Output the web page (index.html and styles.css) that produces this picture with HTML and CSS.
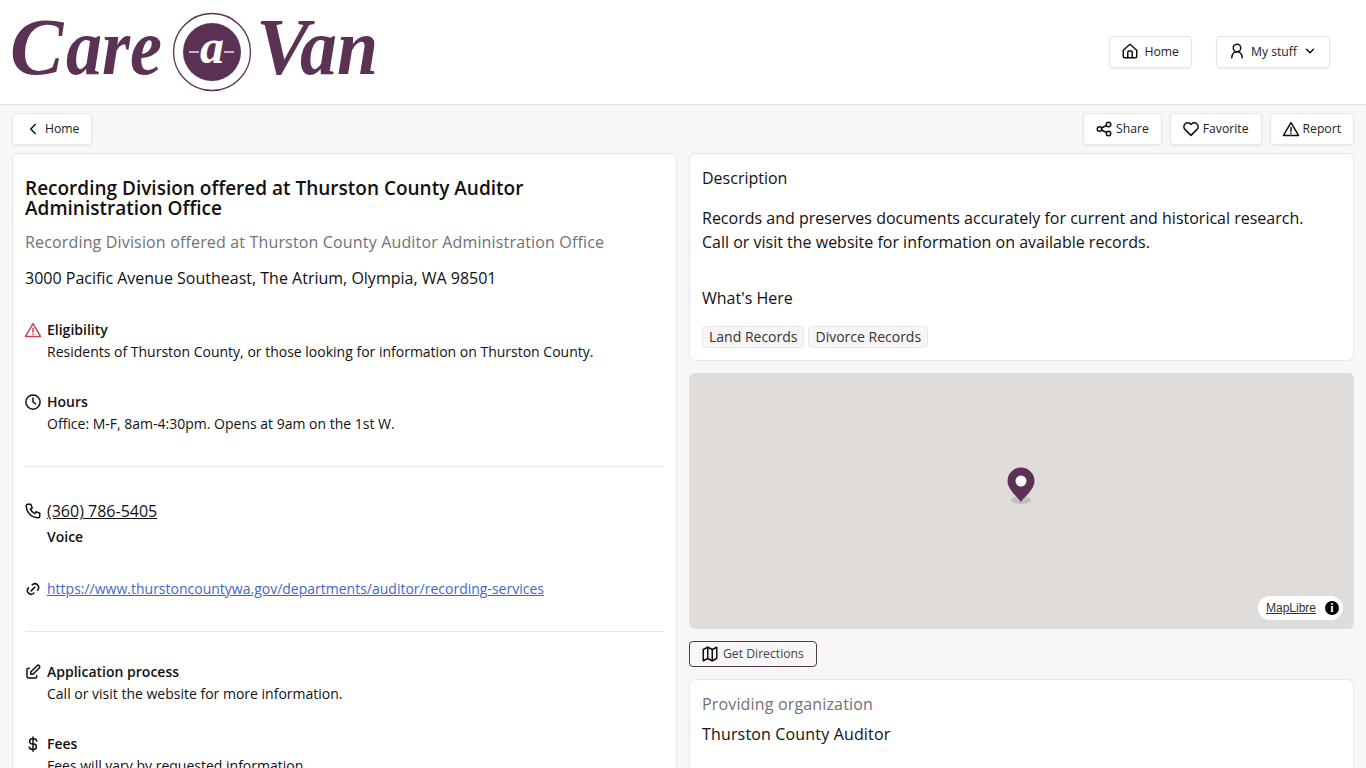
FILE: index.html
```html
<!DOCTYPE html>
<html lang="en">

<head>
  <meta charset="UTF-8" />
  <meta name="viewport" content="width=device-width, initial-scale=1.0" />
  <title>Recording Division - Care-a-Van</title>
  <link rel="stylesheet" href="styles.css">
</head>

<body>
  <header class="site-header">
    <a href="#" class="logo" aria-label="Care-a-Van">
      <svg width="378" height="104" viewBox="-4 -9 378 104">
        <text class="logo-word" y="65"><tspan x="-2">C</tspan><tspan x="54" textLength="96" lengthAdjust="spacingAndGlyphs">are</tspan></text>
        <circle cx="200" cy="43" r="38.5" fill="none" stroke="#5b3254" stroke-width="1.3" />
        <circle cx="200" cy="43" r="29" fill="#5b3254" />
        <text class="logo-a" x="200" y="54" text-anchor="middle">a</text>
        <path d="M177 43h10M212 43h10" stroke="#e9dfe7" stroke-width="1.6" />
        <text class="logo-word" y="65"><tspan x="244">V</tspan><tspan x="288" textLength="78" lengthAdjust="spacingAndGlyphs">an</tspan></text>
      </svg>
    </a>
    <nav class="main-nav">
      <button class="btn btn-wide">
        <svg class="icon" viewBox="0 0 24 24"><path d="M3 11l9-8 9 8v8a2 2 0 0 1-2 2H5a2 2 0 0 1-2-2z" /><path d="M9 21v-7a2 2 0 0 1 2-2h2a2 2 0 0 1 2 2v7" /></svg>
        Home
      </button>
      <button class="btn btn-wide">
        <svg class="icon" viewBox="0 0 24 24"><circle cx="12" cy="8" r="5" /><path d="M5 21c.5-5 3-8 7-8s6.500 3 7 8" /></svg>
        My stuff
        <svg class="icon icon-chevron" viewBox="0 0 24 24"><path d="M6 9l6 6 6-6" /></svg>
      </button>
    </nav>
  </header>

  <div class="action-bar">
    <button class="btn">
      <svg class="icon" viewBox="0 0 24 24"><path d="M15 6l-6 6 6 6" /></svg>
      Home
    </button>
    <div class="action-group">
      <button class="btn">
        <svg class="icon" viewBox="0 0 24 24"><circle cx="6" cy="12" r="3" /><circle cx="18" cy="6" r="3" /><circle cx="18" cy="18" r="3" /><path d="M8.700 10.700l6.600-3.400M8.700 13.300l6.600 3.400" /></svg>
        Share
      </button>
      <button class="btn">
        <svg class="icon" viewBox="0 0 24 24"><path d="M12 20.500l-8-8a5 5 0 0 1 0-7.200 5.200 5.200 0 0 1 7.300 0l.7.700.7-.7a5.200 5.200 0 0 1 7.300 0 5 5 0 0 1 0 7.200z" /></svg>
        Favorite
      </button>
      <button class="btn">
        <svg class="icon" viewBox="0 0 24 24"><path d="M12 3.500L2 20.500h20z" /><path d="M12 10v5M12 17.500v.5" /></svg>
        Report
      </button>
    </div>
  </div>

  <main class="columns">
    <section class="card">
      <h1>Recording Division offered at Thurston County Auditor Administration Office</h1>
      <p class="subtitle">Recording Division offered at Thurston County Auditor Administration Office</p>
      <p class="address">3000 Pacific Avenue Southeast, The Atrium, Olympia, WA 98501</p>

      <div class="info-row info-first">
        <svg class="icon icon-alert" viewBox="0 0 24 24"><path d="M12 3.500L2 20.500h20z" /><path d="M12 10v5M12 17.500v.5" /></svg>
        <div>
          <div class="info-title">Eligibility</div>
          <div>Residents of Thurston County, or those looking for information on Thurston County.</div>
        </div>
      </div>

      <div class="info-row">
        <svg class="icon" viewBox="0 0 24 24"><circle cx="12" cy="12" r="9.500" /><path d="M12 6.500V12l3.500 2.500" /></svg>
        <div>
          <div class="info-title">Hours</div>
          <div>Office: M-F, 8am-4:30pm. Opens at 9am on the 1st W.</div>
        </div>
      </div>

      <hr class="divider">

      <div class="info-row info-phone">
        <svg class="icon" viewBox="0 0 24 24"><path d="M5 3h4l2 5-2.500 1.500a11 11 0 0 0 6 6L16 13l5 2v4a2 2 0 0 1-2 2A16 16 0 0 1 3 5a2 2 0 0 1 2-2" /></svg>
        <div>
          <a href="#" class="phone">(360) 786-5405</a>
          <div class="info-title phone-type">Voice</div>
        </div>
      </div>

      <div class="info-row info-link">
        <svg class="icon" viewBox="0 0 24 24"><path d="M9.500 14.500l5-5" /><path d="M11 6.500l.5-.5a5 5 0 0 1 7 7l-.5.5" /><path d="M13 17.500l-.5.500a5 5 0 0 1-7-7l.5-.5" /></svg>
        <a href="#" class="site-link">https://www.thurstoncountywa.gov/departments/auditor/recording-services</a>
      </div>

      <hr class="divider divider-second">

      <div class="info-row info-first-small">
        <svg class="icon" viewBox="0 0 24 24"><path d="M7 7H6a2 2 0 0 0-2 2v9a2 2 0 0 0 2 2h9a2 2 0 0 0 2-2v-1" /><path d="M20.400 6.600a2.100 2.100 0 0 0-3-3L9 12v3h3z" /></svg>
        <div>
          <div class="info-title">Application process</div>
          <div>Call or visit the website for more information.</div>
        </div>
      </div>

      <div class="info-row">
        <svg class="icon" viewBox="0 0 24 24"><path d="M17 8a4 4 0 0 0-4-3h-2a3.500 3.500 0 0 0 0 7h2a3.500 3.500 0 0 1 0 7h-2a4 4 0 0 1-4-3" /><path d="M12 2.500v19" /></svg>
        <div>
          <div class="info-title">Fees</div>
          <div>Fees will vary by requested information.</div>
        </div>
      </div>
    </section>

    <div class="side">
      <section class="card">
        <h2>Description</h2>
        <p class="description">Records and preserves documents accurately for current and historical research.<br>Call or visit the website for information on available records.</p>
        <h2 class="whats-here">What's Here</h2>
        <div class="chips">
          <span class="chip">Land Records</span>
          <span class="chip">Divorce Records</span>
        </div>
      </section>

      <div class="map">
        <svg class="map-pin" width="40" height="44" viewBox="0 0 40 44">
          <ellipse cx="20" cy="36" rx="10" ry="4" fill="#000" opacity="0.13" />
          <path d="M20 38c-2-4-13.500-12-13.500-21a13.500 13.500 0 0 1 27 0c0 9-11.500 17-13.500 21z" fill="#5b3254" />
          <circle cx="20" cy="17" r="5.500" fill="#fff" />
        </svg>
        <div class="map-credit">
          <a href="#">MapLibre</a>
          <span class="map-info">i</span>
        </div>
      </div>

      <div class="directions">
        <button class="btn btn-outline">
          <svg class="icon" viewBox="0 0 24 24"><path d="M3 6l6-3 6 3 6-3v15l-6 3-6-3-6 3z" /><path d="M9 3v15M15 6v15" /></svg>
          Get Directions
        </button>
      </div>

      <section class="card">
        <div class="org-label">Providing organization</div>
        <div class="org-name">Thurston County Auditor</div>
        <p class="org-text">The Thurston County Auditor provides recording, elections and licensing services for residents.</p>
      </section>
    </div>
  </main>
</body>

</html>
```

FILE: styles.css
```css
:root {
  --primary-color: #5b3254;
  --bg-color: #f8f6f6;
  --text-color: #111;
  --muted-color: #6f7276;
  --border-color: #e8e6e6;
  --border-radius: 6px;
}

* {
  box-sizing: border-box;
}

html,
body {
  margin: 0;
  padding: 0;
  height: 768px;
  overflow: hidden;
  background-color: var(--bg-color);
  color: var(--text-color);
  font-family: 'Open Sans', sans-serif;
  font-size: 14px;
  line-height: 22px;
}

.site-header {
  height: 105px;
  background: white;
  border-bottom: 1px solid #e4e2e2;
  display: flex;
  justify-content: space-between;
  align-items: center;
  padding: 0 36px 0 8px;
}

.logo {
  display: block;
  height: 104px;
}

.logo-word {
  font-family: 'Liberation Serif', serif;
  font-style: italic;
  font-weight: bold;
  font-size: 80px;
  fill: var(--primary-color);
}

.logo-a {
  font-family: 'Liberation Serif', serif;
  font-style: italic;
  font-weight: bold;
  font-size: 48px;
  fill: white;
}

.main-nav {
  display: flex;
  gap: 24px;
  margin-top: -1px;
}

.btn {
  display: inline-flex;
  align-items: center;
  gap: 4px;
  height: 32px;
  padding: 0 12px 1px;
  background: white;
  color: #222;
  border: 1px solid var(--border-color);
  border-radius: 4px;
  box-shadow: 0 1px 2px rgba(0, 0, 0, 0.08);
  font-family: inherit;
  font-size: 12.200px;
}

.btn-wide {
  gap: 6px;
}

.btn-outline {
  height: 26px;
  gap: 5px;
  border-color: #4d3a49;
  color: #444;
  background: transparent;
  box-shadow: none;
}

.icon {
  width: 18px;
  height: 18px;
  margin: 0 -1px;
  flex: none;
  fill: none;
  stroke: #111;
  stroke-width: 2;
  stroke-linecap: round;
  stroke-linejoin: round;
}

.icon-chevron {
  width: 14px;
  height: 14px;
  margin: 0;
  stroke-width: 2.500;
}

.icon-alert {
  stroke: #c9434f;
}

.action-bar {
  display: flex;
  justify-content: space-between;
  padding: 8px 12px;
}

.action-group {
  display: flex;
  gap: 8px;
}

.columns {
  display: grid;
  grid-template-columns: 665px 665px;
  gap: 12px;
  padding: 0 12px;
  align-items: start;
}

.side {
  display: flex;
  flex-direction: column;
  gap: 12px;
}

.directions {
  display: flex;
}

.card {
  background: white;
  border: 1px solid var(--border-color);
  border-radius: var(--border-radius);
  padding: 12px;
}

h1 {
  margin: 12px 0 0;
  font-size: 19px;
  font-weight: 600;
  line-height: 20px;
}

.subtitle {
  margin: 12px 0 0;
  color: var(--muted-color);
  font-size: 16px;
  line-height: 24px;
  letter-spacing: 0.16px;
}

.address {
  margin: 12px 0 0;
  font-size: 16px;
  line-height: 24px;
}

.info-row {
  display: flex;
  gap: 6px;
  margin-top: 28px;
}

.info-row .icon {
  margin-top: 2px;
}

.info-first {
  margin-top: 29px;
}

.info-title {
  font-weight: 600;
}

.divider {
  border: 0;
  border-top: 1px solid var(--border-color);
  margin: 31px 0 0;
}

.info-phone {
  margin-top: 32px;
}

.info-phone .icon {
  margin-top: 3px;
}

.phone {
  color: var(--text-color);
  font-size: 16px;
  line-height: 24px;
}

.phone-type {
  margin-top: 3px;
}

.info-link {
  margin-top: 30px;
}

.site-link {
  color: #3f67c9;
}

.divider-second {
  margin-top: 31px;
}

.info-first-small {
  margin-top: 29px;
}

h2 {
  margin: 0;
  font-size: 16px;
  font-weight: 400;
  line-height: 24px;
}

.description {
  margin: 16px 0 0;
  font-size: 16px;
  line-height: 24px;
}

.whats-here {
  margin-top: 32px;
}

.chips {
  display: flex;
  gap: 4px;
  margin-top: 16px;
}

.chip {
  padding: 0 6px;
  background: #f7f5f5;
  border: 1px solid var(--border-color);
  border-radius: 4px;
  font-size: 14px;
  line-height: 20px;
  color: #333;
}

.map {
  position: relative;
  height: 256px;
  background: #e0dcda;
  border-radius: var(--border-radius);
}

.map-pin {
  position: absolute;
  left: 312px;
  top: 91px;
}

.map-credit {
  position: absolute;
  right: 11px;
  bottom: 9px;
  display: flex;
  align-items: center;
  gap: 9px;
  height: 24px;
  padding: 0 4px 0 8px;
  background: white;
  border-radius: 12px;
  font-family: 'Liberation Sans', sans-serif;
  font-size: 12px;
}

.map-credit a {
  color: #333;
}

.map-info {
  width: 14px;
  height: 14px;
  border-radius: 50%;
  background: black;
  color: white;
  font-family: 'Liberation Serif', serif;
  font-weight: bold;
  font-size: 12px;
  line-height: 14px;
  text-align: center;
}

.org-label {
  color: var(--muted-color);
  font-size: 16px;
  line-height: 24px;
  letter-spacing: 0.16px;
}

.org-name {
  margin-top: 6px;
  font-size: 16px;
  line-height: 24px;
  letter-spacing: 0.16px;
}

.org-text {
  margin: 18px 0 0;
  font-size: 14px;
}
```
